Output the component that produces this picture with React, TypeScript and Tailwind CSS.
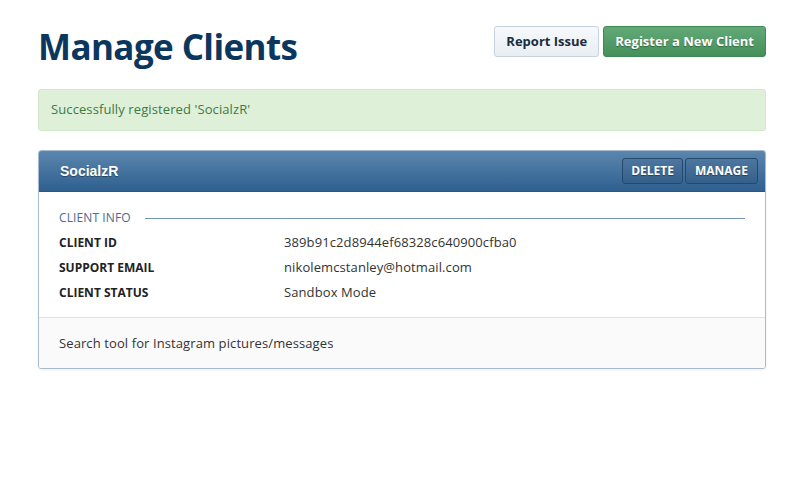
import React from 'react';

const rows: { label: string; value: string }[] = [
  { label: 'CLIENT ID', value: '389b91c2d8944ef68328c640900cfba0' },
  { label: 'SUPPORT EMAIL', value: 'nikolemcstanley@hotmail.com' },
  { label: 'CLIENT STATUS', value: 'Sandbox Mode' },
];

const App: React.FC = () => {
  return (
    <div className="min-h-screen bg-white font-['Open_Sans',sans-serif] text-[#333]">
      <main className="mx-[38px] w-[728px] pt-[26px]">
        <div className="flex items-start justify-between">
          <h1 className="mt-[1px] text-[35px] font-bold leading-[40px] tracking-[-0.6px] text-[#0b375f]">Manage Clients</h1>
          <div className="flex gap-[4px]">
            <button className="h-[31px] rounded-[3px] border border-[#c5d3e0] bg-gradient-to-b from-[#f7f9fb] to-[#e9eef3] px-[11px] text-[13px] font-bold text-[#1b2c3e]">
              Report Issue
            </button>
            <button className="h-[31px] rounded-[3px] border border-[#3f8a53] bg-gradient-to-b from-[#62a977] to-[#45905a] px-[11px] text-[13px] font-bold text-white [text-shadow:0_1px_1px_rgba(0,0,0,0.35)]">
              Register a New Client
            </button>
          </div>
        </div>

        <div className="mt-[22px] flex h-[42px] items-center rounded-[3px] border border-[#d3e8c8] bg-[#dff0d8] px-[12px] text-[13px] tracking-[0.1px] text-[#3c7a48]">
          Successfully registered 'SocialzR'
        </div>

        <div className="mt-[19px] overflow-hidden rounded-[3px] border border-[#a9bccf] shadow-[0_1px_2px_rgba(0,0,0,0.08)]">
          <div className="flex h-[41px] items-center justify-between border-b border-[#2a5680] bg-gradient-to-b from-[#5b86ad] to-[#2f6090] pl-[21px] pr-[7px]">
            <span className="font-['Liberation_Sans',sans-serif] text-[14px] font-bold text-white [text-shadow:0_1px_1px_rgba(0,0,0,0.4)]">SocialzR</span>
            <div className="flex gap-[2px]">
              <button className="h-[26px] rounded-[3px] border border-[#23496e] bg-gradient-to-b from-[#4d77a0] to-[#355f89] px-[8px] text-[12px] font-bold text-white [text-shadow:0_1px_1px_rgba(0,0,0,0.4)]">
                DELETE
              </button>
              <button className="h-[26px] rounded-[3px] border border-[#23496e] bg-gradient-to-b from-[#4d77a0] to-[#355f89] px-[9px] text-[12px] font-bold text-white [text-shadow:0_1px_1px_rgba(0,0,0,0.4)]">
                MANAGE
              </button>
            </div>
          </div>

          <div className="border-b border-[#dde3ea] bg-white px-[20px] pb-[12px] pt-[17px]">
            <div className="flex items-center gap-[14px]">
              <span className="text-[12px] font-normal tracking-[0.1px] text-[#4e6b8c]">CLIENT INFO</span>
              <div className="h-px flex-1 bg-[#7394b3]" />
            </div>
            <div className="mt-[3px]">
              {rows.map((r) => (
                <div key={r.label} className="flex h-[25px] items-center text-[13px]">
                  <span className="w-[225px] text-[12px] font-bold text-[#222]">{r.label}</span>
                  <span className="tracking-[0.1px] text-[#333]">{r.value}</span>
                </div>
              ))}
            </div>
          </div>

          <div className="flex h-[50px] items-center bg-[#fafafa] px-[20px] pt-[1px] text-[13px] tracking-[0.1px] text-[#333]">
            Search tool for Instagram pictures/messages
          </div>
        </div>
      </main>
    </div>
  );
};

export default App;
